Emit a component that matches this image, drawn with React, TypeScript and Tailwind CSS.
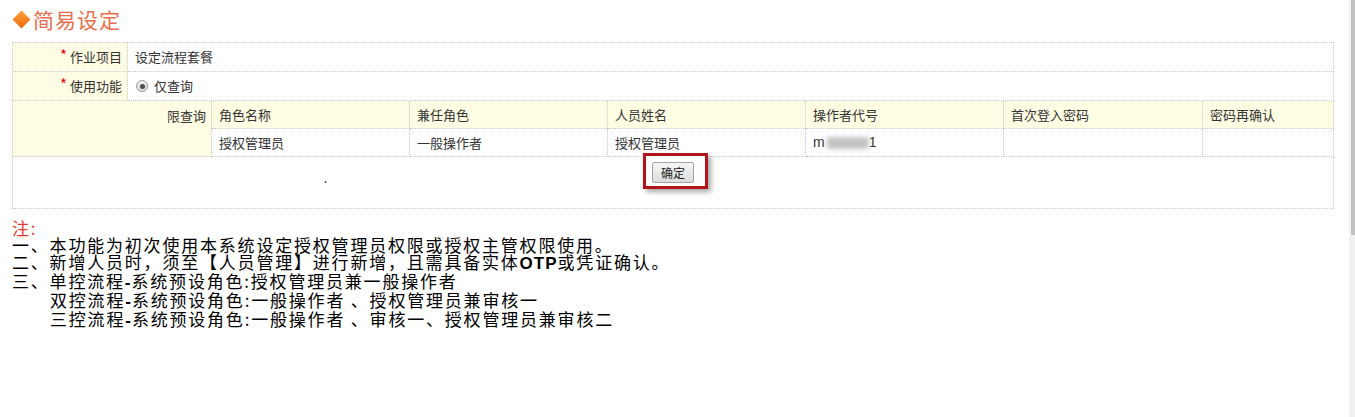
import React from 'react';

const FONT = "font-['Noto_Sans_CJK_SC','Noto_Sans',sans-serif]";
const CELL = 'border-r border-b border-dotted border-[#c8c8c8]';

const COLUMNS = ['角色名称', '兼任角色', '人员姓名', '操作者代号', '首次登入密码', '密码再确认'];

// "-" and "OTP" look heavier in the reference, so they are split out
const NOTES: { parts: string[]; indent: boolean }[] = [
  { parts: ['一、本功能为初次使用本系统设定授权管理员权限或授权主管权限使用。'], indent: false },
  { parts: ['二、新增人员时，须至【人员管理】进行新增，且需具备实体', 'OTP', '或凭证确认。'], indent: false },
  { parts: ['三、单控流程', '-', '系统预设角色:授权管理员兼一般操作者'], indent: false },
  { parts: ['双控流程', '-', '系统预设角色:一般操作者 、授权管理员兼审核一'], indent: true },
  { parts: ['三控流程', '-', '系统预设角色:一般操作者 、审核一、授权管理员兼审核二'], indent: true },
];

const Label: React.FC<{ children: React.ReactNode }> = ({ children }) => (
  <div className={`${CELL} bg-[#fffde4] flex items-center justify-end pr-[5px]`}>
    <span className="text-[#e60012] text-[15px] leading-none relative -top-[3px] mr-[3px]">*</span>
    <span>{children}</span>
  </div>
);

export default function App() {
  return (
    <div className={`flex w-[1355px] h-[417px] bg-white overflow-hidden ${FONT}`}>
      <main className="flex-1 pl-[12px]">
        {/* Title */}
        <div className="flex items-center h-[39px]">
          <svg width="19" height="19" viewBox="0 0 19 19" aria-hidden="true">
            <defs>
              <linearGradient id="dia" x1="0" y1="0" x2="0" y2="1">
                <stop offset="0%" stopColor="#ffa23a" />
                <stop offset="100%" stopColor="#ec6a0c" />
              </linearGradient>
            </defs>
            <polygon points="9.5,0.5 18.5,9.5 9.5,18.5 0.5,9.5" fill="url(#dia)" />
          </svg>
          <h1 className="ml-[2px] text-[21px] leading-none text-[#e96d4d] tracking-[1px]">简易设定</h1>
        </div>

        {/* Form table */}
        <div className="mt-[3px] w-[1322px] border-t border-l border-dotted border-[#c8c8c8] text-[13px] text-[#333]">
          <div className="grid grid-cols-[115px_1fr] h-[29px]">
            <Label>作业项目</Label>
            <div className={`${CELL} flex items-center pl-[7px]`}>设定流程套餐</div>
          </div>
          <div className="grid grid-cols-[115px_1fr] h-[29px]">
            <Label>使用功能</Label>
            <div className={`${CELL} flex items-center pl-[8px]`}>
              <span className="w-[12px] h-[12px] rounded-full border border-[#9a9a9a] bg-gradient-to-b from-[#f2f2f2] to-[#d9d9d9] flex items-center justify-center">
                <span className="w-[5px] h-[5px] rounded-full bg-[#4d4d4d]" />
              </span>
              <span className="ml-[6px]">仅查询</span>
            </div>
          </div>

          <div className="grid grid-cols-[199px_198px_198px_198px_198px_199px_131px] grid-rows-[28px_28px]">
            <div className={`${CELL} row-span-2 bg-[#fffde4] text-right pr-[5px] pt-[5px]`}>限查询</div>
            {COLUMNS.map((c) => (
              <div key={c} className={`${CELL} bg-[#fffde4] flex items-center pl-[7px]`}>{c}</div>
            ))}
            <div className={`${CELL} flex items-center pl-[7px]`}>授权管理员</div>
            <div className={`${CELL} flex items-center pl-[7px]`}>一般操作者</div>
            <div className={`${CELL} flex items-center pl-[7px]`}>授权管理员</div>
            <div className={`${CELL} flex items-center pl-[7px]`}>
              <span className="font-['Liberation_Sans',sans-serif] text-[14px]">m</span>
              <span className="ml-[2px] w-[42px] h-[12px] bg-[#c4c4c4] blur-[2px]" />
              <span className="font-['Liberation_Sans',sans-serif] text-[14px]">1</span>
            </div>
            <div className={CELL} />
            <div className={CELL} />
          </div>

          <div className={`${CELL} h-[52px] grid grid-cols-[1fr_auto_1fr] items-start`}>
            <div className="text-center pt-[15px] text-[12px] leading-none text-[#222]">.</div>
            <div className="mt-[-4px] ml-[5px] border-[3px] border-[#b3131b] pt-[6px] pl-[6px] pr-[11px] pb-[3px] shadow-[3px_3px_5px_rgba(0,0,0,0.35)] bg-white">
              <button className="h-[21px] w-[42px] rounded-[2px] border border-[#a3a3a3] bg-gradient-to-b from-[#f6f6f6] to-[#dcdcdc] text-[12px] text-[#222] leading-none">
                确定
              </button>
            </div>
            <div />
          </div>
        </div>

        {/* Notes */}
        <div className="mt-[10px] text-[17px] leading-[17px] tracking-[1.8px] text-black">
          <p className="text-[#e53a2e]">注:</p>
          {NOTES.map((n) => (
            <p key={n.parts.join('')} className={n.indent ? 'pl-[38px]' : ''}>
              {n.parts.map((p, i) =>
                p === '-' || p === 'OTP' ? (
                  <span key={i} className="font-['Liberation_Sans',sans-serif] font-bold tracking-[1px]">{p}</span>
                ) : (
                  <span key={i}>{p}</span>
                ),
              )}
            </p>
          ))}
        </div>
      </main>

      {/* Scrollbar */}
      <aside className="w-[6px] bg-[#f0f0f0] flex justify-end">
        <div className="w-[4px] h-[235px] bg-[#c1c1c1]" />
      </aside>
    </div>
  );
}
